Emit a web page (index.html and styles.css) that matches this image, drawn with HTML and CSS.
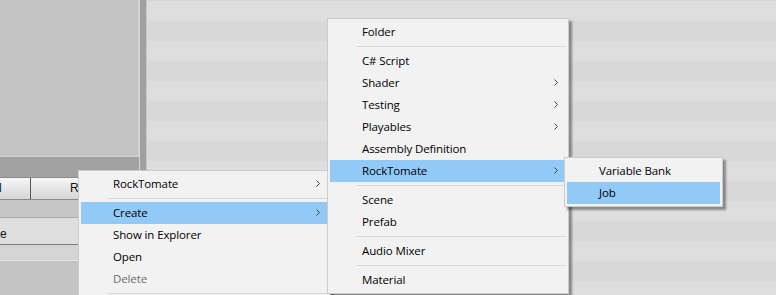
FILE: index.html
```html
<!DOCTYPE html>
<html lang="en">

<head>
    <meta charset="UTF-8">
    <meta name="viewport" content="width=device-width, initial-scale=1.0">
    <title>Create Menu</title>
    <link rel="stylesheet" href="styles.css">
</head>

<body>

    <div class="screen">
        <div class="left">
            <div class="panel"></div>
            <div class="gap"></div>
            <div class="header">
                <span class="col col-a">l</span>
                <span class="col col-b">R</span>
            </div>
            <div class="band"></div>
            <div class="field">e</div>
            <div class="strip"></div>
            <div class="rest"></div>
        </div>
        <div class="divider"></div>
        <div class="list"></div>

        <!-- project context menu -->
        <div class="menu menu-main">
            <div class="item">RockTomate<svg class="arrow" viewBox="0 0 4 7"><polyline points="0.5,0.5 3.5,3.5 0.5,6.5"/></svg></div>
            <div class="sep"></div>
            <div class="item active">Create<svg class="arrow" viewBox="0 0 4 7"><polyline points="0.5,0.5 3.5,3.5 0.5,6.5"/></svg></div>
            <div class="item">Show in Explorer</div>
            <div class="item">Open</div>
            <div class="item disabled">Delete</div>
            <div class="sep"></div>
        </div>

        <!-- Create submenu -->
        <div class="menu menu-create">
            <div class="item">Folder</div>
            <div class="sep"></div>
            <div class="item">C# Script</div>
            <div class="item">Shader<svg class="arrow" viewBox="0 0 4 7"><polyline points="0.5,0.5 3.5,3.5 0.5,6.5"/></svg></div>
            <div class="item">Testing<svg class="arrow" viewBox="0 0 4 7"><polyline points="0.5,0.5 3.5,3.5 0.5,6.5"/></svg></div>
            <div class="item">Playables<svg class="arrow" viewBox="0 0 4 7"><polyline points="0.5,0.5 3.5,3.5 0.5,6.5"/></svg></div>
            <div class="item">Assembly Definition</div>
            <div class="item active">RockTomate<svg class="arrow" viewBox="0 0 4 7"><polyline points="0.5,0.5 3.5,3.5 0.5,6.5"/></svg></div>
            <div class="sep"></div>
            <div class="item">Scene</div>
            <div class="item">Prefab</div>
            <div class="sep"></div>
            <div class="item">Audio Mixer</div>
            <div class="sep"></div>
            <div class="item">Material</div>
        </div>

        <!-- RockTomate submenu -->
        <div class="menu menu-rock">
            <div class="item">Variable Bank</div>
            <div class="item active">Job</div>
        </div>
    </div>

</body>

</html>
```

FILE: styles.css
```css
body {
    margin: 0;
    font-family: 'Open Sans', 'Noto Sans', sans-serif;
}

.screen {
    position: relative;
    width: 776px;
    height: 295px;
    overflow: hidden;
    display: flex;
    background: #c3c3c3;
}

/* left side of the editor */
.left {
    width: 139px;
    display: flex;
    flex-direction: column;
    font-family: 'Liberation Sans', Arial, sans-serif;
    font-size: 12px;
    color: #111;
}

.panel {
    height: 155px;
    background: #c3c3c3;
    border-right: 1px solid #d2d2d2;
    border-bottom: 2px solid #cdcdcd;
}

.gap {
    height: 20px;
    background: #a2a2a2;
}

.header {
    height: 21px;
    display: flex;
    border-top: 1px solid #8a8a8a;
    border-bottom: 1px solid #8a8a8a;
    background: linear-gradient(#f6f6f6, #d6d6d6);
}

.col {
    line-height: 21px;
}

.col-a {
    width: 31px;
    border-right: 1px solid #555;
    margin-left: -1px;
}

.col-b {
    padding-left: 39px;
}

.band {
    height: 17px;
    background: #c6c6c6;
    border-bottom: 1px solid #a9a9a9;
}

.field {
    height: 26px;
    line-height: 32px;
    background: #dedede;
    border-bottom: 1px solid #7d7d7d;
}

.strip {
    height: 15px;
    background: #d4d4d4;
    border-bottom: 1px solid #e6e6e6;
}

.rest {
    flex: 1;
    background: #c3c3c3;
}

.divider {
    width: 8px;
    background: #a0a0a0;
    border-left: 1px solid #d6d6d6;
    border-right: 1px solid #c9c9c9;
    box-sizing: border-box;
}

.list {
    flex: 1;
    border-top: 1px solid #d4d4d4;
    background: repeating-linear-gradient(#dedede 0, #dedede 20px, #d8d8d8 20px, #d8d8d8 40px);
}

/* context menus */
.menu {
    position: absolute;
    box-sizing: border-box;
    background: #f2f2f2;
    border: 1px solid #cccccc;
    padding: 2px;
    box-shadow: 3px 3px 2px rgba(0, 0, 0, 0.38);
    font-size: 11.5px;
    letter-spacing: -0.12px;
    color: #000;
}

.menu-main {
    left: 78px;
    top: 170px;
    width: 253px;
}

.menu-create {
    left: 327px;
    top: 18px;
    width: 242px;
}

.menu-rock {
    left: 564px;
    top: 157px;
    width: 159px;
}

.item {
    height: 22px;
    box-sizing: border-box;
    display: flex;
    align-items: center;
    justify-content: space-between;
    padding: 0 8px 1px 32px;
    white-space: nowrap;
}

.item.active {
    background: #91c9f7;
}

.item.disabled {
    color: #6d6d6d;
}

.arrow {
    width: 4px;
    height: 7px;
    fill: none;
    stroke: #404040;
    stroke-width: 1;
}

.sep {
    height: 7px;
    margin-left: 27px;
    background: linear-gradient(transparent 3px, #d7d7d7 3px, #d7d7d7 4px, transparent 4px);
}
```
